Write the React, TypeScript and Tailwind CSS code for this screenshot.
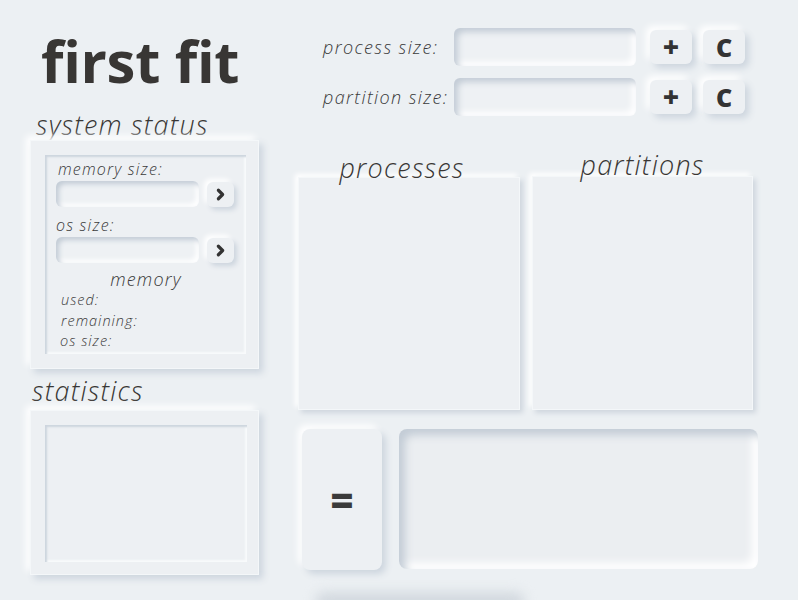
import { ChevronRight } from "lucide-react";

const raised = "shadow-[4px_4px_7px_#cdd5de,-4px_-4px_7px_#ffffff]";
const inset = "shadow-[inset_4px_4px_6px_#c3ccd6,inset_-4px_-4px_6px_#ffffff]";
const font = "font-['Open_Sans',sans-serif]";

function SmallButton({ children }: { children: React.ReactNode }) {
  return (
    <button
      className={`w-[42px] h-[34px] rounded-md bg-[#edf0f3] flex items-center justify-center text-[#333] ${raised}`}
    >
      {children}
    </button>
  );
}

function InputRow({ label }: { label: string }) {
  return (
    <div className="flex items-center h-[38px]">
      <span className="w-[156px] pl-[25px] text-[18px] tracking-[1.4px] italic font-light text-[#3a3a3a]">{label}</span>
      <div className={`w-[182px] h-[38px] rounded-md bg-[#eef1f4] ${inset}`} />
      <div className="flex gap-[11px] ml-[14px]">
        <SmallButton>
          <span className="text-[28px] font-extrabold leading-none -mt-[3px]">+</span>
        </SmallButton>
        <SmallButton>
          <span className="text-[25px] font-extrabold leading-none">C</span>
        </SmallButton>
      </div>
    </div>
  );
}

function SizeField({ label, indent }: { label: string; indent: string }) {
  return (
    <div className="flex flex-col">
      <span className={`${indent} text-[16px] tracking-[1.2px] italic font-light text-[#3a3a3a] leading-[20px]`}>{label}</span>
      <div className="flex items-center gap-[8px] mt-[2px]">
        <div className="w-[143px] h-[26px] rounded-md bg-[#eef1f4] shadow-[inset_3px_3px_5px_#c3ccd6,inset_-3px_-3px_5px_#ffffff]" />
        <button className="w-[27px] h-[25px] rounded-md bg-[#edf0f3] flex items-center justify-center shadow-[3px_3px_5px_#cdd5de,-3px_-3px_5px_#ffffff]">
          <ChevronRight className="w-[17px] h-[17px] text-[#333]" strokeWidth={4.5} />
        </button>
      </div>
    </div>
  );
}

export default function App() {
  return (
    <div className={`relative w-[798px] h-[600px] overflow-hidden bg-[#ecf0f3] ${font} flex`}>
      {/* left column */}
      <div className="w-[298px] pl-[30px] flex flex-col">
        <div className="h-[110px] pl-[11px] pt-[26px]">
          <h1 className="text-[58px] font-bold leading-[70px] tracking-[-0.3px] text-[#383634]">first fit</h1>
        </div>
        <div className="h-[30px] pl-[6px] text-[27px] tracking-[1.2px] italic font-light leading-[30px] text-[#383634]">
          system status
        </div>
        <div className={`w-[229px] h-[229px] bg-[#edf0f3] border border-[#f4f7f9] p-[14px] ${raised}`}>
          <div className="h-[199px] w-[201px] shadow-[inset_2px_2px_2px_#cdd5de,inset_-2px_-2px_2px_#f8fafb] pl-[11px] pt-[4px] flex flex-col">
            <SizeField label="memory size:" indent="pl-[2px]" />
            <div className="h-[8px]" />
            <SizeField label="os size:" indent="" />
            <div className="text-center pr-[10px] mt-[5px] text-[18px] tracking-[1.2px] italic font-light leading-[22px] text-[#3a3a3a]">
              memory
            </div>
            <div className="flex flex-col text-[14.5px] tracking-[1px] italic font-light leading-[20.5px] text-[#3a3a3a]">
              <span className="pl-[5px]">used:</span>
              <span className="pl-[5px]">remaining:</span>
              <span className="pl-[4px]">os size:</span>
            </div>
          </div>
        </div>
        <div className="h-[41px] flex items-end pl-[2px] text-[27px] tracking-[1.2px] italic font-light leading-[30px] text-[#383634]">
          <span className="pb-[4px]">statistics</span>
        </div>
        <div className={`w-[229px] h-[165px] bg-[#edf0f3] border border-[#f4f7f9] p-[14px] ${raised}`}>
          <div className="h-[137px] w-[202px] shadow-[inset_2px_2px_2px_#cdd5de,inset_-2px_-2px_2px_#f8fafb]" />
        </div>
      </div>

      {/* right column */}
      <div className="flex-1 flex flex-col">
        <div className="pt-[28px] flex flex-col gap-[12px]">
          <InputRow label="process size:" />
          <InputRow label="partition size:" />
        </div>
        <div className="flex gap-[12px] mt-[37px]">
          <div className="flex flex-col w-[222px]">
            <div className="h-[24px] text-center pr-[14px] text-[27px] tracking-[1.2px] italic font-light leading-[30px] text-[#383634] relative z-10">
              processes
            </div>
            <div className="h-[233px] bg-[#edf0f3] border border-[#f4f7f9] shadow-[3px_3px_5px_#cfd6de,-3px_-3px_5px_#ffffff]" />
          </div>
          <div className="flex flex-col w-[221px]">
            <div className="h-[23px] text-center text-[27px] tracking-[1.2px] italic font-light leading-[24px] text-[#383634] relative z-10">
              partitions
            </div>
            <div className="h-[234px] bg-[#edf0f3] border border-[#f4f7f9] shadow-[3px_3px_5px_#cfd6de,-3px_-3px_5px_#ffffff]" />
          </div>
        </div>
        <div className="flex gap-[17px] mt-[19px] pl-[4px]">
          <button
            className={`w-[80px] h-[141px] rounded-lg bg-[#edf0f3] flex items-center justify-center text-[#3a3a3a] ${raised}`}
          >
            <span className="text-[40px] font-extrabold leading-none">=</span>
          </button>
          <div className="w-[359px] h-[140px] rounded-lg bg-[#ebeef1] shadow-[inset_6px_6px_8px_#c3ccd6,inset_-6px_-6px_8px_#ffffff]" />
        </div>
      </div>

      <div className="absolute left-[315px] top-[592px] w-[210px] h-[20px] rounded-full bg-[#d3d9df] blur-[6px]" />
    </div>
  );
}
